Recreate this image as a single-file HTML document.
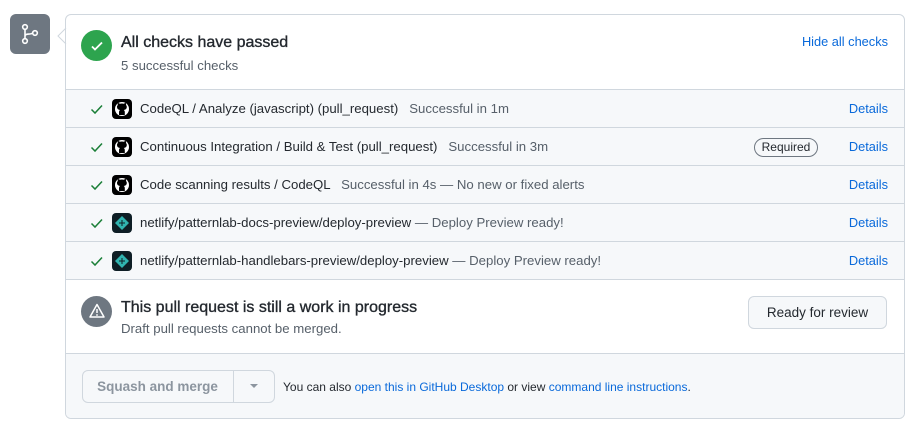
<!DOCTYPE html>
<html><head><style>
body{margin:0;width:911px;height:427px;background:#fff;font-family:"Liberation Sans",Arial,sans-serif;font-size:13.2px;color:#24292f;position:relative;overflow:hidden}
.abs{position:absolute}
.box{left:65px;top:14px;width:838px;height:403px;border:1px solid #d0d7de;border-radius:6px;overflow:hidden}
.row{position:absolute;left:0;width:838px;height:37px;background:#f6f8fa;border-top:1px solid #d0d7de}
.row .ck{position:absolute;left:24px;top:12px}
.row .av{position:absolute;left:46px;top:9px;width:20px;height:20px;border-radius:4px;background:#000}
.row .t{position:absolute;left:74px;top:11px;white-space:nowrap}
.row .t b{font-weight:normal;color:#24292f}
.row .t span{color:#57606a}
.row .d{position:absolute;right:16px;top:11px;color:#0969da;font-size:12.8px}
a{color:#0969da;text-decoration:none}
.h{font-size:16px;-webkit-text-stroke:0.35px #24292f}
</style></head><body>
<div class="abs" style="left:10px;top:14px;width:40px;height:40px;background:#6e7781;border-radius:6px">
<svg width="40" height="40" viewBox="0 0 40 40"><g fill="none" stroke="#fff" stroke-width="1.6"><circle cx="15" cy="13" r="2.3"/><circle cx="15" cy="27" r="2.3"/><circle cx="25" cy="19" r="2.3"/><path d="M15 15.3v9.4M15 22c0-3 6-1 7.8-3"/></g></svg></div>
<svg class="abs" style="left:57px;top:28px" width="10" height="16"><path d="M9 0L1 8l8 8" fill="#fff" stroke="#d0d7de"/></svg>
<div class="abs box">
 <div class="abs" style="left:15px;top:15px;width:31px;height:31px;border-radius:50%;background:#2da44e"></div>
 <svg class="abs" style="left:23px;top:23px" width="16" height="16"><path d="M3 8.5l3 3 7-7" fill="none" stroke="#fff" stroke-width="1.8"/></svg>
 <div class="abs h" style="left:55px;top:19px">All checks have passed</div>
 <div class="abs" style="left:55px;top:43px;color:#57606a">5 successful checks</div>
 <div class="abs" style="right:16px;top:19px;color:#0969da;font-size:12.8px">Hide all checks</div>

 <div class="row" style="top:74px"><svg class="ck" width="14" height="14"><path d="M1.5 7.5l3.5 3.5 7-7.5" fill="none" stroke="#1a7f37" stroke-width="1.5"/></svg><div class="av"><svg width="20" height="20"><circle cx="10" cy="10" r="7" fill="#fff"/><path d="M7 16v-3c0-1 .5-1.5 1-2-2-.3-3-1.3-3-3 0-.8.3-1.4.8-2-.1-.4-.2-1.1.1-2 1 0 1.7.6 2 .8.6-.2 1.3-.3 2-.3s1.4.1 2 .3c.4-.3 1-.8 2-.8.3.9.2 1.6.1 2 .5.6.8 1.2.8 2 0 1.7-1 2.7-3 3 .5.5 1 1 1 2v3" fill="#000"/></svg></div><div class="t"><b>CodeQL / Analyze (javascript) (pull_request)</b> &nbsp; <span>Successful in 1m</span></div><div class="d">Details</div></div>
 <div class="row" style="top:112px"><svg class="ck" width="14" height="14"><path d="M1.5 7.5l3.5 3.5 7-7.5" fill="none" stroke="#1a7f37" stroke-width="1.5"/></svg><div class="av"><svg width="20" height="20"><circle cx="10" cy="10" r="7" fill="#fff"/><path d="M7 16v-3c0-1 .5-1.5 1-2-2-.3-3-1.3-3-3 0-.8.3-1.4.8-2-.1-.4-.2-1.1.1-2 1 0 1.7.6 2 .8.6-.2 1.3-.3 2-.3s1.4.1 2 .3c.4-.3 1-.8 2-.8.3.9.2 1.6.1 2 .5.6.8 1.2.8 2 0 1.7-1 2.7-3 3 .5.5 1 1 1 2v3" fill="#000"/></svg></div><div class="t"><b>Continuous Integration / Build &amp; Test (pull_request)</b> &nbsp; <span>Successful in 3m</span></div>
 <div class="abs" style="left:688px;top:10px;width:62px;height:17px;border:1px solid #6e7781;border-radius:10px;font-size:12px;text-align:center;line-height:17px">Required</div><div class="d">Details</div></div>
 <div class="row" style="top:150px"><svg class="ck" width="14" height="14"><path d="M1.5 7.5l3.5 3.5 7-7.5" fill="none" stroke="#1a7f37" stroke-width="1.5"/></svg><div class="av"><svg width="20" height="20"><circle cx="10" cy="10" r="7" fill="#fff"/><path d="M7 16v-3c0-1 .5-1.5 1-2-2-.3-3-1.3-3-3 0-.8.3-1.4.8-2-.1-.4-.2-1.1.1-2 1 0 1.7.6 2 .8.6-.2 1.3-.3 2-.3s1.4.1 2 .3c.4-.3 1-.8 2-.8.3.9.2 1.6.1 2 .5.6.8 1.2.8 2 0 1.7-1 2.7-3 3 .5.5 1 1 1 2v3" fill="#000"/></svg></div><div class="t"><b>Code scanning results / CodeQL</b> &nbsp; <span>Successful in 4s — No new or fixed alerts</span></div><div class="d">Details</div></div>
 <div class="row" style="top:188px"><svg class="ck" width="14" height="14"><path d="M1.5 7.5l3.5 3.5 7-7.5" fill="none" stroke="#1a7f37" stroke-width="1.5"/></svg><div class="av" style="background:#0e1e25"><svg width="20" height="20"><path d="M10 3l7 7-7 7-7-7z" fill="#30b4b0"/><path d="M7 10h6M10 7v6" stroke="#0e1e25" stroke-width="1"/></svg></div><div class="t"><b>netlify/patternlab-docs-preview/deploy-preview</b> <span>— Deploy Preview ready!</span></div><div class="d">Details</div></div>
 <div class="row" style="top:226px"><svg class="ck" width="14" height="14"><path d="M1.5 7.5l3.5 3.5 7-7.5" fill="none" stroke="#1a7f37" stroke-width="1.5"/></svg><div class="av" style="background:#0e1e25"><svg width="20" height="20"><path d="M10 3l7 7-7 7-7-7z" fill="#30b4b0"/><path d="M7 10h6M10 7v6" stroke="#0e1e25" stroke-width="1"/></svg></div><div class="t"><b>netlify/patternlab-handlebars-preview/deploy-preview</b> <span>— Deploy Preview ready!</span></div><div class="d">Details</div></div>

 <div class="abs" style="left:0;top:264px;width:838px;height:74px;background:#fff;border-top:1px solid #d0d7de"></div>
 <div class="abs" style="left:15px;top:281px;width:31px;height:31px;border-radius:50%;background:#6e7781"></div>
 <svg class="abs" style="left:22px;top:287px" width="18" height="18"><path d="M9 2.5L16 15H2z" fill="none" stroke="#fff" stroke-width="1.5" stroke-linejoin="round"/><path d="M9 7v4" stroke="#fff" stroke-width="1.5"/><circle cx="9" cy="13" r=".9" fill="#fff"/></svg>
 <div class="abs h" style="left:55px;top:284px">This pull request is still a work in progress</div>
 <div class="abs" style="left:55px;top:306px;color:#57606a">Draft pull requests cannot be merged.</div>
 <div class="abs" style="left:682px;top:281px;width:137px;height:31px;border:1px solid #d0d7de;border-radius:6px;background:#f6f8fa;text-align:center;line-height:31px;font-size:13.5px">Ready for review</div>

 <div class="abs" style="left:0;top:338px;width:838px;height:65px;background:#f6f8fa;border-top:1px solid #d0d7de"></div>
 <div class="abs" style="left:16px;top:355px;width:191px;height:31px;border:1px solid #d0d7de;border-radius:6px;background:#f6f8fa"></div>
 <div class="abs" style="left:167px;top:356px;width:1px;height:31px;background:#d0d7de"></div>
 <div class="abs" style="left:16px;top:356px;width:151px;text-align:center;line-height:31px;font-size:13.5px;font-weight:bold;color:#8c959f">Squash and merge</div>
 <svg class="abs" style="left:183px;top:368px" width="10" height="6"><path d="M1 1h8L5 5z" fill="#8c959f"/></svg>
 <div class="abs" style="left:217px;top:365px;font-size:12px">You can also <a>open this in GitHub Desktop</a> or view <a>command line instructions</a>.</div>
</div>
</body></html>
